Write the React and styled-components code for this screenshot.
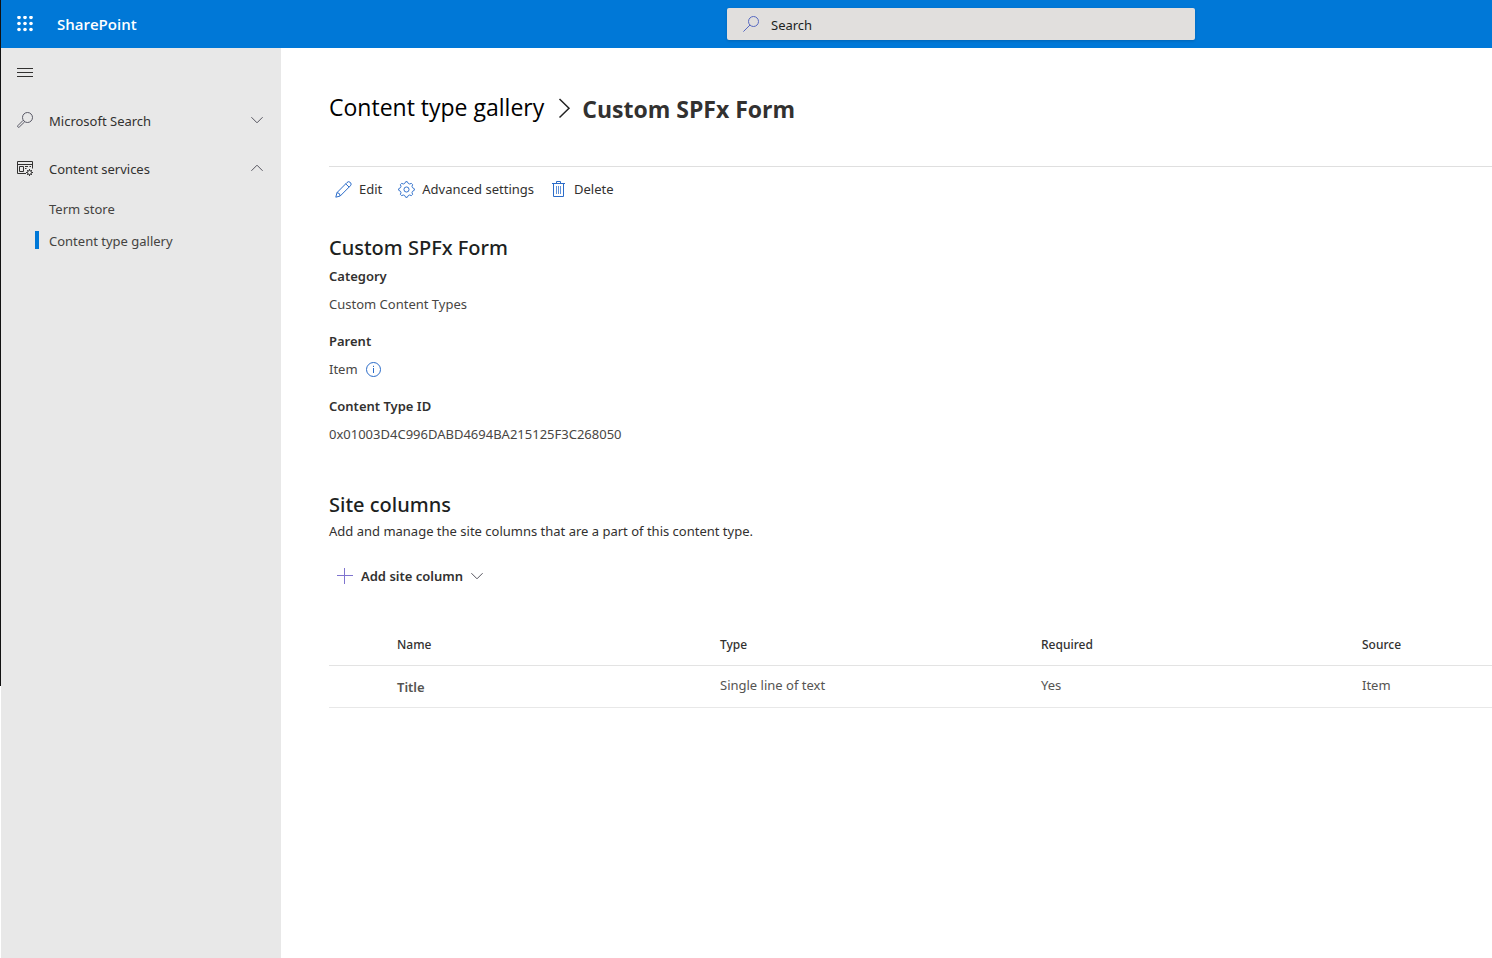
import React, { useState } from "react";
import styled, { createGlobalStyle } from "styled-components";

const headingFont = `"Open Sans", "Noto Sans", sans-serif`;

const GlobalStyle = createGlobalStyle`
  * { box-sizing: border-box; }
  body {
    margin: 0;
    background: #ffffff;
    color: #323130;
    font-family: "Noto Sans", "Open Sans", sans-serif;
    font-size: 13px;
    line-height: 20px;
  }
  h1, h2, p, ul, ol, dl, dd { margin: 0; padding: 0; }
  ul, ol { list-style: none; }
  button { border: 0; background: none; padding: 0; font: inherit; color: inherit; cursor: pointer; }
  a { color: inherit; text-decoration: none; }
  svg { display: block; flex: none; }
`;

const Window = styled.div`
  display: flex;
  min-height: 100vh;
`;

const WindowEdge = styled.div`
  flex: none;
  width: 1px;
  height: 686px;
  background: #111111;
`;

const Page = styled.div`
  flex: 1;
  min-width: 0;
  display: flex;
  flex-direction: column;
`;

const SuiteHeader = styled.header`
  display: grid;
  grid-template-columns: 1fr 468px 297px;
  align-items: center;
  height: 48px;
  background: #0078d7;
`;

const Brand = styled.div`
  display: flex;
  align-items: center;
  color: #ffffff;
`;

const Launcher = styled.button`
  width: 48px;
  height: 48px;
  display: grid;
  place-items: center;
`;

const BrandLink = styled.a`
  padding-left: 8px;
  font-family: ${headingFont};
  font-size: 15px;
  font-weight: 600;
`;

const SearchBox = styled.label`
  display: flex;
  align-items: center;
  gap: 12px;
  height: 32px;
  padding: 0 16px;
  border-radius: 2px;
  background: #e1dfdd;
  box-shadow: 0 1px 3px rgba(0, 0, 0, 0.16);
`;

const SearchInput = styled.input`
  flex: 1;
  min-width: 0;
  height: 32px;
  padding: 2px 0 0;
  border: 0;
  outline: 0;
  background: transparent;
  font: inherit;
  color: #201f1e;
  &::placeholder { color: #201f1e; opacity: 1; }
`;

const Body = styled.div`
  flex: 1;
  display: flex;
`;

const Sidebar = styled.nav`
  flex: none;
  width: 280px;
  background: #e8e8e8;
`;

const NavToggle = styled.button`
  width: 48px;
  height: 48px;
  display: grid;
  place-items: center;
`;

const NavGroup = styled.button`
  display: flex;
  align-items: center;
  gap: 16px;
  width: 100%;
  height: 48px;
  padding: 0 18px 0 16px;
  text-align: left;
`;

const NavLabel = styled.span`
  flex: 1;
  padding-top: 2px;
`;

const NavLink = styled.a`
  display: flex;
  align-items: center;
  height: 32px;
  padding-left: 34px;
  color: #444341;
  &::before {
    content: "";
    width: 4px;
    height: 18px;
    margin-right: 10px;
    background: ${(p) => (p.$active ? "#0078d7" : "transparent")};
  }
`;

const Main = styled.main`
  flex: 1;
  min-width: 0;
  padding-left: 48px;
`;

const Breadcrumb = styled.ol`
  display: flex;
  align-items: center;
  height: 118px;
  font-family: ${headingFont};
  font-size: 23px;
  line-height: 32px;
  color: #000000;
  border-bottom: 1px solid #dfdfdf;
  box-sizing: content-box;
`;

const Crumb = styled.li`
  display: flex;
  align-items: center;
  gap: 12px;
  padding-right: 10px;
`;

const CurrentTitle = styled.h1`
  padding-top: 4px;
  font-size: 23px;
  font-weight: 700;
  color: #323130;
`;

const CommandBar = styled.div`
  display: flex;
  align-items: center;
  gap: 16px;
  height: 44px;
  padding-left: 6px;
`;

const Command = styled.button`
  display: flex;
  align-items: center;
  gap: 7px;
  height: 44px;
`;

const Section = styled.section`
  padding-top: ${(p) => p.$top}px;
`;

const SectionTitle = styled.h2`
  font-size: 20px;
  line-height: 28px;
  font-weight: 500;
  color: #201f1e;
`;

const Details = styled.dl`
  display: flex;
  flex-direction: column;
  gap: 9px;
  line-height: 28px;
`;

const Term = styled.dt`
  font-weight: 600;
`;

const Value = styled.dd`
  display: flex;
  align-items: center;
  gap: 7px;
  color: #484644;
`;

const Description = styled.p`
  line-height: 24px;
`;

const AddButton = styled.button`
  display: flex;
  align-items: center;
  gap: 8px;
  height: 40px;
  margin: 13px 0 29px;
  padding: 0 8px;
  font-weight: 600;
`;

const Table = styled.table`
  width: 100%;
  table-layout: fixed;
  border-collapse: separate;
  border-spacing: 0;
  text-align: left;
  color: #555452;
`;

const Col = styled.col`
  width: ${(p) => p.$width}px;
`;

const HeaderCell = styled.th`
  height: 41px;
  padding: 0 0 0 ${(p) => (p.$first ? 68 : 0)}px;
  border-bottom: 1px solid #e3e3e3;
  font-size: 12px;
  font-weight: 500;
  color: #323130;
`;

const Cell = styled.td`
  height: 42px;
  padding: 0 0 4px;
  border-bottom: 1px solid #e8e8e8;
`;

const RowHeader = styled.th`
  height: 42px;
  padding: 0 0 0 68px;
  border-bottom: 1px solid #e8e8e8;
  font-weight: 600;
`;

const blue = "#2b6cc9";

const WaffleIcon = () => (
  <svg width="16" height="16" viewBox="0 0 16 16" fill="#fff" aria-hidden="true">
    {[2, 8, 14].flatMap((y) =>
      [2, 8, 14].map((x) => <circle key={`${x}-${y}`} cx={x} cy={y - 0.5} r="1.8" />)
    )}
  </svg>
);

const SearchIcon = ({ color }) => (
  <svg width="16" height="16" viewBox="0 0 16 16" fill="none" stroke={color} aria-hidden="true">
    <circle cx="10.5" cy="5.5" r="5" />
    <path d="M7 9 0.4 15.6" />
  </svg>
);

const MagnifierIcon = () => (
  <svg width="16" height="16" viewBox="0 0 16 16" fill="none" stroke="#4a4958" strokeWidth="0.9" aria-hidden="true">
    <circle cx="10.5" cy="5.5" r="5" />
    <path d="M6.2 8.3 0.9 13.6a.9.9 0 0 0 1.4 1.4L7.7 9.8" />
  </svg>
);

const MenuIcon = () => (
  <svg width="16" height="16" viewBox="0 0 16 16" stroke="#323130" aria-hidden="true">
    <path d="M0 4.5h16M0 8.5h16M0 12.5h16" />
  </svg>
);

const ChevronIcon = ({ up, color = "#55545e" }) => (
  <svg width="12" height="12" viewBox="0 0 12 12" fill="none" stroke={color} aria-hidden="true">
    <path d={up ? "M.4 8.8 6 3.2l5.6 5.6" : "M.4 3.2 6 8.8l5.6-5.6"} />
  </svg>
);

const BreadcrumbArrow = () => (
  <svg width="16" height="24" viewBox="0 0 16 24" fill="none" stroke="#222" strokeWidth="1.5" aria-hidden="true">
    <path d="M3.5 4 13 13.2 3.5 22.5" />
  </svg>
);

const ContentIcon = () => (
  <svg width="16" height="16" viewBox="0 0 16 16" fill="none" stroke="#323130" aria-hidden="true">
    <path d="M9 13.5H.5v-12h15v7M.5 4.5h15M2.5 6.5h4v5h-4zM8 6.5h3M8 8.5h1.5M12.5 6.5H14" />
    <circle cx="12.5" cy="12.5" r="2" />
    <path d="M12.5 9v1.2M12.5 14.8V16M9 12.5h1.2M14.8 12.5H16M10 10l.9.9M14.1 14.1l.9.9M10 15l.9-.9M14.1 10.9 15 10" />
  </svg>
);

const EditIcon = () => (
  <svg width="17" height="17" viewBox="0 0 17 17" fill="none" stroke={blue} strokeLinejoin="round" aria-hidden="true">
    <path d="M.8 16.2 2 11.6 12 1.5a2.2 2.2 0 0 1 3.4 3.3L5.2 15zM2 11.6A3.5 3.5 0 0 1 5.2 15M10.7 2.8l3.4 3.3" />
  </svg>
);

const gearPath = Array.from({ length: 32 }, (_, i) => {
  const r = i % 4 < 2 ? 7.4 : 5.9;
  const a = ((i - 0.5) * Math.PI) / 16;
  return `${i ? "L" : "M"}${(8 + r * Math.cos(a)).toFixed(2)} ${(8 + r * Math.sin(a)).toFixed(2)}`;
}).join("") + "Z";

const GearIcon = () => (
  <svg width="17" height="17" viewBox="0 0 16 16" fill="none" stroke={blue} strokeWidth="0.9" strokeLinejoin="round" aria-hidden="true">
    <path d={gearPath} />
    <circle cx="8" cy="8" r="2.4" />
  </svg>
);

const DeleteIcon = () => (
  <svg width="17" height="17" viewBox="0 0 17 17" fill="none" stroke={blue} aria-hidden="true">
    <path d="M2 2.5h13M6.5 2.5v-2h4v2M3.5 2.5v13h10v-13" />
    <path d="M6.5 5v8M8.5 5v8M10.5 5v8" strokeOpacity="0.75" />
  </svg>
);

const InfoIcon = () => (
  <svg width="17" height="17" viewBox="0 0 17 17" fill="none" stroke={blue} aria-hidden="true">
    <circle cx="8.5" cy="8.5" r="7" />
    <path d="M8.5 7v5M8.5 4.8v1.2" />
  </svg>
);

const PlusIcon = () => (
  <svg width="16" height="16" viewBox="0 0 16 16" fill="none" stroke="#7f74cf" aria-hidden="true">
    <path d="M0 7.5h16M7.5 0v16" />
  </svg>
);

const columns = ["Name", "Type", "Required", "Source"];
const rows = [{ name: "Title", type: "Single line of text", required: "Yes", source: "Item" }];

export default function App() {
  const [query, setQuery] = useState("");
  return (
    <Window>
      <GlobalStyle />
      <WindowEdge />
      <Page>
        <SuiteHeader>
          <Brand>
            <Launcher aria-label="App launcher"><WaffleIcon /></Launcher>
            <BrandLink href="#">SharePoint</BrandLink>
          </Brand>
          <SearchBox>
            <SearchIcon color="#5668c0" />
            <SearchInput
              aria-label="Search"
              placeholder="Search"
              value={query}
              onChange={(e) => setQuery(e.target.value)}
            />
          </SearchBox>
        </SuiteHeader>
        <Body>
          <Sidebar>
            <NavToggle aria-label="Toggle navigation"><MenuIcon /></NavToggle>
            <NavGroup aria-expanded="false">
              <MagnifierIcon /><NavLabel>Microsoft Search</NavLabel><ChevronIcon />
            </NavGroup>
            <NavGroup aria-expanded="true">
              <ContentIcon /><NavLabel>Content services</NavLabel><ChevronIcon up />
            </NavGroup>
            <ul>
              <li><NavLink href="#"><NavLabel>Term store</NavLabel></NavLink></li>
              <li><NavLink href="#" $active aria-current="page"><NavLabel>Content type gallery</NavLabel></NavLink></li>
            </ul>
          </Sidebar>
          <Main>
            <Breadcrumb>
              <Crumb><a href="#">Content type gallery</a><BreadcrumbArrow /></Crumb>
              <li><CurrentTitle>Custom SPFx Form</CurrentTitle></li>
            </Breadcrumb>
            <CommandBar>
              <Command><EditIcon />Edit</Command>
              <Command><GearIcon />Advanced settings</Command>
              <Command><DeleteIcon />Delete</Command>
            </CommandBar>
            <Section $top={23}>
              <SectionTitle>Custom SPFx Form</SectionTitle>
              <Details>
                <div><Term>Category</Term><Value>Custom Content Types</Value></div>
                <div><Term>Parent</Term><Value>Item<InfoIcon /></Value></div>
                <div><Term>Content Type ID</Term><Value>0x01003D4C996DABD4694BA215125F3C268050</Value></div>
              </Details>
            </Section>
            <Section $top={43}>
              <SectionTitle>Site columns</SectionTitle>
              <Description>Add and manage the site columns that are a part of this content type.</Description>
              <AddButton><PlusIcon />Add site column<ChevronIcon /></AddButton>
              <Table>
                <colgroup>
                  <Col $width={391} /><Col $width={321} /><Col $width={321} /><col />
                </colgroup>
                <thead>
                  <tr>{columns.map((c, i) => <HeaderCell key={c} scope="col" $first={i === 0}>{c}</HeaderCell>)}</tr>
                </thead>
                <tbody>
                  {rows.map((r) => (
                    <tr key={r.name}>
                      <RowHeader scope="row">{r.name}</RowHeader>
                      <Cell>{r.type}</Cell>
                      <Cell>{r.required}</Cell>
                      <Cell>{r.source}</Cell>
                    </tr>
                  ))}
                </tbody>
              </Table>
            </Section>
          </Main>
        </Body>
      </Page>
    </Window>
  );
}
